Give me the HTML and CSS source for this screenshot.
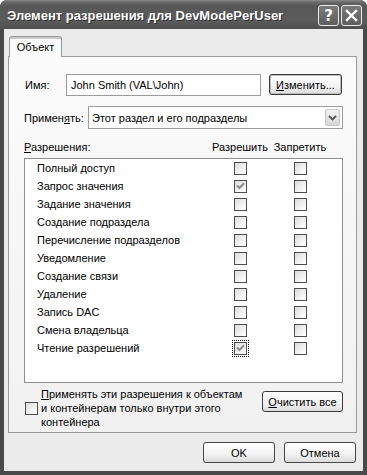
FILE: index.html
```html
<!DOCTYPE html>
<html lang="ru">
<head>
  <meta charset="UTF-8">
  <title>Элемент разрешения для DevModePerUser</title>
  <link rel="stylesheet" href="styles.css">
</head>
<body>
  <div class="window">
    <div class="titlebar">
      <div class="title-text">Элемент разрешения для DevModePerUser</div>
      <div class="title-btns">
        <div class="title-btn help">?</div>
        <div class="title-btn close">
          <svg width="13" height="13" viewBox="0 0 13 13"><path d="M2 2 L11 11 M11 2 L2 11" stroke="#fff" stroke-width="2.4" stroke-linecap="square"/></svg>
        </div>
      </div>
    </div>

    <div class="client">
      <div class="tabs">
        <div class="tab active">Объект</div>
      </div>
      <div class="panel">
        <div class="form-row">
          <span class="label name-label">Имя:</span>
          <div class="textbox">John Smith (VAL\John)</div>
          <button class="btn change-btn"><u>И</u>зменить...</button>
        </div>
        <div class="form-row apply-row">
          <span class="label apply-label">Примен<u>я</u>ть:</span>
          <div class="combo">
            <span class="combo-text">Этот раздел и его подразделы</span>
            <span class="combo-arrow">
              <svg width="9" height="6" viewBox="0 0 9 6"><path d="M1 1 L4.5 4.5 L8 1" fill="none" stroke="#555" stroke-width="1.8"/></svg>
            </span>
          </div>
        </div>

        <div class="perm-head">
          <span class="perm-name"><u>Р</u>азрешения:</span>
          <span class="perm-col">Разрешить</span>
          <span class="perm-col">Запретить</span>
        </div>
        <div class="listbox" id="perm-list"></div>

        <div class="bottom-row">
          <div class="inherit">
            <span class="check"></span>
            <div class="inherit-text">
              <div><u>П</u>рименять эти разрешения к объектам</div>
              <div>и контейнерам только внутри этого</div>
              <div>контейнера</div>
            </div>
          </div>
          <button class="btn clear-btn"><u>О</u>чистить все</button>
        </div>
      </div>

      <div class="footer">
        <button class="btn dlg-btn">OK</button>
        <button class="btn dlg-btn">Отмена</button>
      </div>
    </div>
  </div>

  <script>
    var perms = [
      ['Полный доступ', false],
      ['Запрос значения', true],
      ['Задание значения', false],
      ['Создание подраздела', false],
      ['Перечисление подразделов', false],
      ['Уведомление', false],
      ['Создание связи', false],
      ['Удаление', false],
      ['Запись DAC', false],
      ['Смена владельца', false],
      ['Чтение разрешений', true]
    ];
    var tick = '<svg width="9" height="8" viewBox="0 0 9 8"><path d="M1 3.5 L3.5 6 L8 1.2" fill="none" stroke="#8c8c8c" stroke-width="2"/></svg>';

    function buildList() {
      var list = document.getElementById('perm-list');
      perms.forEach(function (p, i) {
        var row = document.createElement('div');
        row.className = 'perm-row';
        var focus = i === perms.length - 1 ? ' focus' : '';
        row.innerHTML =
          '<span class="perm-name">' + p[0] + '</span>' +
          '<span class="perm-col"><span class="check-wrap' + focus + '"><span class="check">' + (p[1] ? tick : '') + '</span></span></span>' +
          '<span class="perm-col"><span class="check-wrap"><span class="check"></span></span></span>';
        list.appendChild(row);
      });
    }
    buildList();
  </script>
</body>
</html>
```

FILE: styles.css
```css
* {
  box-sizing: border-box;
}
body {
  margin: 0;
  padding: 0;
  background-color: #fff;
  font-family: "Liberation Sans", Arial, sans-serif;
  font-size: 11px;
  color: #000;
}
.window {
  width: 367px;
  height: 475px;
  background-color: #4a4a4a;
  border-radius: 7px 7px 0 0;
  display: flex;
  flex-direction: column;
  overflow: hidden;
}
.titlebar {
  height: 29px;
  flex: none;
  display: flex;
  align-items: center;
  justify-content: space-between;
  padding: 0 5px 0 7px;
  background: linear-gradient(#8c8c8c 0, #6a6a6a 2px, #575757 6px, #5c5c5c 20px, #4f4f4f 29px);
}
.title-text {
  color: #fff;
  font-family: "Liberation Sans", Arial, sans-serif;
  font-weight: bold;
  font-size: 13px;
  text-shadow: 1px 1px 0 #2e2e2e;
  margin-top: 1px;
}
.title-btns {
  display: flex;
  gap: 2px;
  margin-top: 2px;
}
.title-btn {
  width: 21px;
  height: 21px;
  border: 1px solid #e8e8e8;
  border-radius: 3px;
  background: linear-gradient(#7a7a7a, #5e5e5e);
  display: flex;
  align-items: center;
  justify-content: center;
  color: #fff;
}
.title-btn.help {
  font-family: "DejaVu Sans", sans-serif;
  font-weight: bold;
  font-size: 15px;
}
.client {
  flex: 1;
  margin: 0 4px 4px 4px;
  background-color: #ebebeb;
  padding: 7px 6px 0 4px;
  display: flex;
  flex-direction: column;
}
.tabs {
  display: flex;
  padding-left: 1px;
  height: 20px;
  position: relative;
  z-index: 1;
}
.tab {
  width: 53px;
  height: 21px;
  border: 1px solid #9a9a9a;
  border-bottom: none;
  border-radius: 3px 3px 0 0;
  background: #fbfbfb;
  box-shadow: inset 0 2px 0 #cacaca;
  line-height: 21px;
  text-align: center;
}
.panel {
  height: 377px;
  flex: none;
  border: 1px solid #9a9a9a;
  background: linear-gradient(#fbfbfb, #f1f1f1);
  padding: 16px 13px 0 15px;
}
.form-row {
  display: flex;
  align-items: center;
  height: 23px;
}
.label {
  white-space: nowrap;
}
.name-label {
  width: 42px;
  padding-left: 1px;
}
.apply-label {
  width: 64px;
}
.textbox {
  width: 195px;
  height: 22px;
  border: 1px solid #9c9c9c;
  background: #fff;
  line-height: 20px;
  padding-left: 4px;
}
.btn {
  font-family: "Liberation Sans", Arial, sans-serif;
  font-size: 11px;
  color: #000;
  border: 1px solid #3a3a3a;
  border-radius: 3px;
  background: linear-gradient(#ffffff, #f2f2f2 60%, #dcdcdc);
  padding: 0;
  height: 21px;
}
.change-btn {
  margin-left: 8px;
  width: 73px;
  box-shadow: inset 0 0 0 1px #bdbdbd;
}
.apply-row {
  margin-top: 10px;
}
.combo {
  flex: 1;
  height: 23px;
  border: 1px solid #9c9c9c;
  background: #fff;
  display: flex;
  align-items: center;
  justify-content: space-between;
  padding-left: 3px;
}
.combo-arrow {
  width: 15px;
  height: 17px;
  margin-right: 2px;
  border-radius: 2px;
  background: linear-gradient(#f4f4f4, #d6d6d6);
  border: 1px solid #c6c6c6;
  display: flex;
  align-items: center;
  justify-content: center;
}
.perm-head {
  display: flex;
  height: 15px;
  line-height: 15px;
  margin-top: 11px;
  padding-right: 13px;
}
.perm-name {
  flex: 1;
  white-space: nowrap;
}
.perm-col {
  width: 60px;
  display: flex;
  justify-content: center;
  white-space: nowrap;
}
.listbox {
  margin-top: 3px;
  height: 225px;
  border: 1px solid #8e8e8e;
  background: #fff;
  padding: 0 12px;
}
.perm-row {
  display: flex;
  align-items: center;
  height: 18px;
}
.check-wrap {
  padding: 1px;
  border: 1px dotted transparent;
  display: flex;
}
.check-wrap.focus {
  border-color: #000;
}
.check {
  width: 13px;
  height: 13px;
  flex: none;
  border: 1px solid #4c4c4c;
  background: linear-gradient(135deg, #dcdcdc, #f6f6f6 70%, #fff);
  display: flex;
  align-items: center;
  justify-content: center;
}
.bottom-row {
  display: flex;
  align-items: center;
  justify-content: space-between;
  margin-top: 4px;
}
.inherit {
  display: flex;
  align-items: center;
  gap: 3px;
  padding-left: 1px;
}
.inherit-text {
  width: 205px;
  line-height: 14px;
  white-space: nowrap;
}
.clear-btn {
  width: 81px;
  margin-top: -13px;
}
.footer {
  display: flex;
  justify-content: flex-end;
  gap: 9px;
  margin-top: 9px;
  padding-right: 1px;
}
.dlg-btn {
  width: 72px;
  height: 21px;
  border-color: #474747;
}
```
